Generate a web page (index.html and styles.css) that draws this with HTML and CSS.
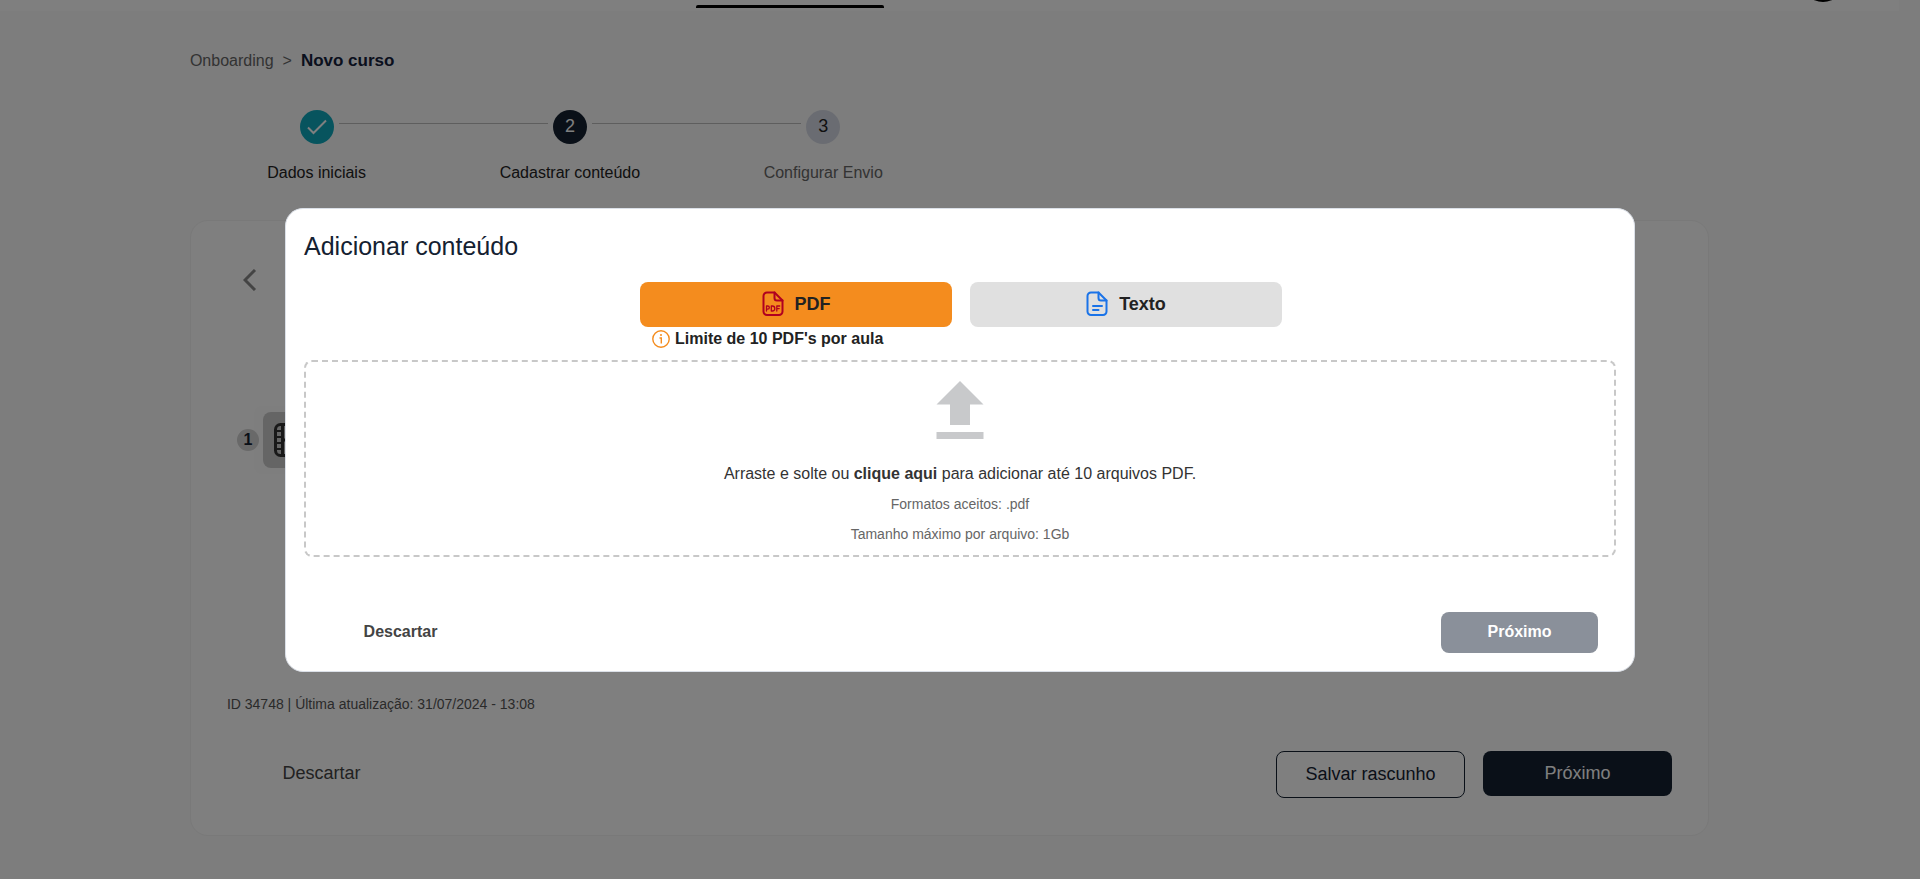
FILE: index.html
```html
<!DOCTYPE html>
<html lang="pt-BR">
<head>
  <meta charset="UTF-8" />
  <meta name="viewport" content="width=device-width, initial-scale=1.0" />
  <title>Novo curso</title>
  <link rel="stylesheet" href="styles.css">
</head>
<body>
  <div class="page">
    <header class="topbar">
      <span class="topbar-tab"></span>
      <span class="topbar-avatar"></span>
    </header>
    <main class="container">
      <nav class="breadcrumb">
        <a href="#">Onboarding</a>
        <span>&gt;</span>
        <strong>Novo curso</strong>
      </nav>

      <ol class="steps">
        <li class="step done">
          <span class="step-circle">
            <svg width="20" height="16" viewBox="0 0 20 16" fill="none" stroke="currentColor" stroke-width="2"><path d="M1 8.500l5.500 5.500L19 1.500"/></svg>
          </span>
          <span class="step-label">Dados iniciais</span>
        </li>
        <li class="step current">
          <span class="step-circle">2</span>
          <span class="step-label">Cadastrar conteúdo</span>
        </li>
        <li class="step">
          <span class="step-circle">3</span>
          <span class="step-label">Configurar Envio</span>
        </li>
      </ol>

      <section class="card">
        <button class="back" type="button" aria-label="Voltar">
          <svg width="14" height="22" viewBox="0 0 14 22" fill="none" stroke="currentColor" stroke-width="3"><path d="M12 1L2 11l10 10"/></svg>
        </button>
        <div class="lesson">
          <span class="lesson-number">1</span>
          <div class="lesson-box">
            <div class="lesson-thumb">
              <svg width="34" height="34" viewBox="0 0 34 34" fill="none" stroke="currentColor" stroke-width="3">
                <rect x="1.500" y="1.500" width="31" height="31" rx="5"/>
                <path d="M8.500 1v32M25.500 1v32M8.500 17h17"/>
                <path stroke-width="2" d="M1 8h7.500M1 14h7.500M1 20h7.500M1 26h7.500M25.500 8H33M25.500 14H33M25.500 20H33M25.500 26H33"/>
              </svg>
            </div>
          </div>
        </div>
        <p class="card-info">ID 34748 | Última atualização: 31/07/2024 - 13:08</p>
        <div class="card-footer">
          <button class="btn btn-plain" type="button">Descartar</button>
          <div class="card-actions">
            <button class="btn btn-outline" type="button">Salvar rascunho</button>
            <button class="btn btn-dark" type="button">Próximo</button>
          </div>
        </div>
      </section>
    </main>
  </div>

  <div class="overlay">
    <div class="modal" role="dialog" aria-labelledby="modalTitle">
      <h2 id="modalTitle">Adicionar conteúdo</h2>
      <div class="types">
        <div class="type">
          <button class="type-btn active" type="button">
            <svg width="22" height="26" viewBox="0 0 22 26" fill="none" stroke="#b00020" stroke-width="2" stroke-linejoin="round" stroke-linecap="round">
              <path d="M12.500 1.500H5a3.500 3.500 0 0 0-3.500 3.500v15.500A3.500 3.500 0 0 0 5 24h12a3.500 3.500 0 0 0 3.500-3.500V9.500z"/>
              <path d="M12.500 1.500V7A2.500 2.500 0 0 0 15 9.500h5.500"/>
              <path stroke-width="1.300" d="M4.500 20v-5h1.300a1.500 1.500 0 0 1 0 3.100H4.500M9.300 15v5h1a2.300 2.300 0 0 0 0-5zM14.800 20v-5h2.900M14.800 17.600h2.400"/>
            </svg>
            PDF
          </button>
          <p class="hint">
            <svg width="18" height="18" viewBox="0 0 18 18" fill="none" stroke="#f48c1e" stroke-width="1.400">
              <circle cx="9" cy="9" r="8.200"/>
              <path d="M7.500 8h1.800v5.500"/>
              <circle cx="9" cy="5" r="1" fill="#f48c1e" stroke="none"/>
            </svg>
            Limite de 10 PDF's por aula
          </p>
        </div>
        <div class="type">
          <button class="type-btn" type="button">
            <svg width="22" height="26" viewBox="0 0 22 26" fill="none" stroke="#1a73e8" stroke-width="2" stroke-linejoin="round" stroke-linecap="round">
              <path d="M12.500 1.500H5a3.500 3.500 0 0 0-3.500 3.500v15.500A3.500 3.500 0 0 0 5 24h12a3.500 3.500 0 0 0 3.500-3.500V9.500z"/>
              <path d="M12.500 1.500V7A2.500 2.500 0 0 0 15 9.500h5.500M7 15h9M7 19h5.500"/>
            </svg>
            Texto
          </button>
        </div>
      </div>

      <div class="dropzone">
        <svg width="48" height="58" viewBox="0 0 48 58" fill="#c8c9cb"><path d="M24 0l23.500 23.500H34V44H14V23.500H.5zM.5 51h47v7H.5z"/></svg>
        <p class="drop-main">Arraste e solte ou <strong>clique aqui</strong> para adicionar até 10 arquivos PDF.</p>
        <p class="drop-note">Formatos aceitos: .pdf</p>
        <p class="drop-note">Tamanho máximo por arquivo: 1Gb</p>
      </div>

      <div class="modal-footer">
        <button class="modal-btn" type="button">Descartar</button>
        <button class="modal-btn modal-next" type="button">Próximo</button>
      </div>
    </div>
  </div>
</body>
</html>
```

FILE: styles.css
```css
* {
  box-sizing: border-box;
}
body {
  margin: 0;
  border-bottom: 1px solid #f5ebf2;
  background: #fafafa;
  color: #222;
  font-family: 'Liberation Sans', Arial, sans-serif;
  font-size: 16px;
  line-height: 20px;
}
p, h2, ol {
  margin: 0;
  padding: 0;
}
button {
  font-family: inherit;
  border: none;
  background: none;
  padding: 0;
  cursor: pointer;
}
svg {
  display: block;
  flex: none;
}
.page {
  margin-right: 21px;
}
.topbar {
  position: relative;
  height: 11px;
  background: #fff;
  overflow: hidden;
}
.topbar-tab {
  position: absolute;
  left: 696px;
  top: 5px;
  width: 188px;
  height: 3px;
  background: #000;
  border-radius: 2px 2px 0 0;
}
.topbar-avatar {
  position: absolute;
  right: 54px;
  bottom: 9px;
  width: 44px;
  height: 44px;
  background: #000;
  border-radius: 50%;
}
.container {
  width: 80%;
  margin: 0 auto;
  padding: 40px 0 44px;
}
.breadcrumb {
  display: flex;
  gap: 9px;
  color: #666;
}
.breadcrumb a {
  color: inherit;
  text-decoration: none;
}
.breadcrumb strong {
  color: #14213a;
  font-size: 17px;
}
.steps {
  display: flex;
  max-width: 760px;
  padding-top: 39px;
  list-style: none;
}
.step {
  position: relative;
  flex: 1;
  display: flex;
  flex-direction: column;
  align-items: center;
  gap: 19px;
  color: #666;
}
.step:not(:last-child)::after {
  content: '';
  position: absolute;
  left: calc(50% + 22px);
  right: calc(-50% + 22px);
  top: 13px;
  height: 1px;
  background: #bdbdbd;
}
.step-circle {
  display: flex;
  justify-content: center;
  align-items: center;
  width: 34px;
  height: 34px;
  padding-bottom: 2px;
  border-radius: 50%;
  background: #d5d9e4;
  color: #222;
  font-size: 18px;
}
.done, .current {
  color: #222;
}
.done .step-circle {
  padding: 0;
  background: #0fa9bd;
  color: #fff;
}
.current .step-circle {
  background: #142131;
  color: #fff;
}
.card {
  margin-top: 37px;
  padding: 48px 36px 37px;
  border: 1px solid #f2f2f2;
  border-radius: 18px;
  background: #fff;
}
.back {
  display: block;
  margin-left: 16px;
  color: #888;
}
.lesson {
  display: flex;
  align-items: center;
  margin: 115px 72px 0 10px;
}
.lesson-number {
  z-index: 1;
  width: 22px;
  height: 22px;
  margin-right: -5px;
  border-radius: 50%;
  background: #d2d2d2;
  color: #142131;
  font-weight: bold;
  line-height: 22px;
  text-align: center;
}
.lesson-box {
  flex: 1;
  padding: 6px 9px;
  border-radius: 8px;
  background: #fcfcfc;
}
.lesson-thumb {
  display: flex;
  justify-content: center;
  align-items: center;
  width: 56px;
  height: 56px;
  border-radius: 8px;
  background: #cacaca;
  color: #333;
}
.card-info {
  padding-top: 220px;
  color: #555;
  font-size: 14px;
}
.card-footer {
  display: flex;
  justify-content: space-between;
  align-items: flex-start;
  margin-top: 37px;
}
.card-actions {
  display: flex;
  align-items: flex-start;
  gap: 18px;
}
.btn {
  width: 189px;
  height: 45px;
  border-radius: 8px;
  font-size: 18px;
}
.btn-plain {
  color: #444;
}
.btn-outline {
  height: 47px;
  border: 1px solid #142131;
  color: #142131;
}
.btn-dark {
  background: #142131;
  color: #fff;
}
.overlay {
  position: fixed;
  inset: 0;
  z-index: 10;
  display: flex;
  justify-content: center;
  align-items: center;
  background: rgba(0, 0, 0, 0.5);
}
.modal {
  width: 90%;
  max-width: 1350px;
  padding: 18px;
  border: 1px solid #dbe0e8;
  border-radius: 18px;
  background: #fff;
}
.modal h2 {
  color: #142131;
  font-size: 25px;
  font-weight: normal;
  line-height: 38px;
}
.types {
  display: flex;
  justify-content: center;
  gap: 18px;
  padding: 17px 0 0 2px;
}
.type {
  width: 312px;
}
.type-btn {
  display: flex;
  justify-content: center;
  align-items: center;
  gap: 11px;
  width: 100%;
  height: 45px;
  border-radius: 8px;
  background: #e0e0e0;
  color: #222;
  font-size: 18px;
  font-weight: bold;
}
.type-btn.active {
  background: #f48c1e;
}
.hint {
  display: flex;
  align-items: center;
  gap: 5px;
  height: 24px;
  padding-left: 12px;
  font-weight: bold;
}
.dropzone {
  display: flex;
  flex-direction: column;
  align-items: center;
  margin-top: 9px;
  padding: 19px 0 11px;
  border: 2px dashed #c8c8c8;
  border-radius: 8px;
  text-align: center;
}
.drop-main {
  padding-top: 25px;
  color: #333;
}
.drop-note {
  padding-top: 10px;
  color: #666;
  font-size: 14px;
}
.modal-footer {
  display: flex;
  justify-content: space-between;
  padding: 55px 18px 0;
}
.modal-btn {
  width: 157px;
  height: 41px;
  border-radius: 8px;
  color: #444;
  font-size: 16px;
  font-weight: bold;
}
.modal-next {
  background: #8a909a;
  color: #fff;
}
```
